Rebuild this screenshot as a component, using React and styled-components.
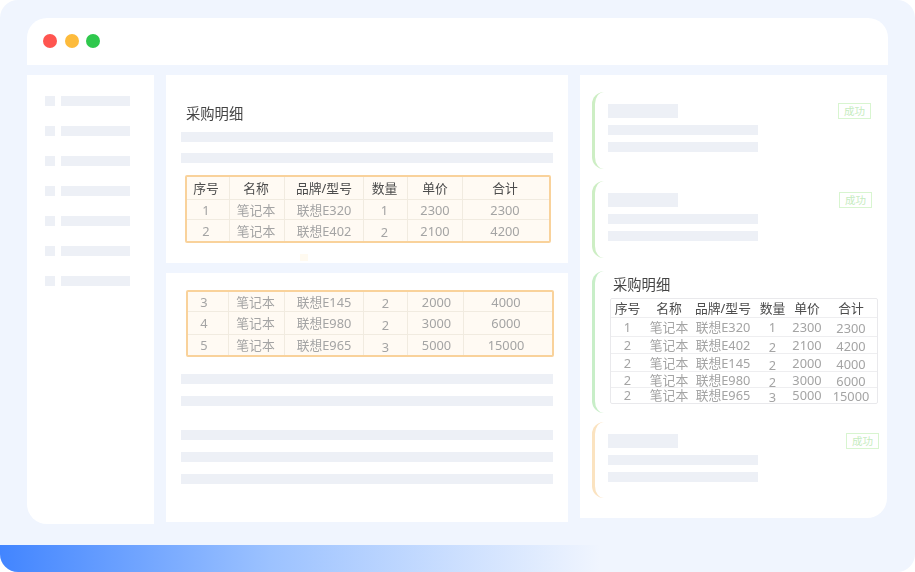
import React from "react";
import styled, { createGlobalStyle } from "styled-components";

const Global = createGlobalStyle`
  html, body { margin: 0; padding: 0; background: #fff; }
  body { font-family: "Noto Sans", "Noto Sans CJK SC", sans-serif; }
`;

const Stage = styled.div`
  width: 915px; height: 572px; background: #f0f5fe; border-radius: 18px;
  overflow: hidden; display: flex; flex-direction: column;
`;
const Win = styled.div`
  width: 861px; margin: 18px 0 0 27px; display: flex; flex-direction: column; gap: 10px;
`;
const TitleBar = styled.div`
  height: 47px; background: #fff; border-radius: 20px 20px 0 0;
  display: flex; align-items: center; padding: 0 0 1px 16px; gap: 7.5px; box-sizing: border-box;
`;
const Dot = styled.span`
  width: 14px; height: 14px; border-radius: 50%; background: ${p => p.$c};
`;
const Columns = styled.div`
  display: flex; align-items: flex-start; gap: 12px;
`;
const Sidebar = styled.div`
  width: 127px; height: 449px; box-sizing: border-box; background: #fff;
  border-radius: 0 0 0 20px; padding: 21px 0 0 18px;
  display: flex; flex-direction: column; gap: 20px;
`;
const NavRow = styled.div`display: flex; gap: 6px;`;
const NavIcon = styled.div`width: 10px; height: 10px; background: #edf0f6;`;
const NavBar = styled.div`width: 69px; height: 10px; background: #edf0f6;`;

const Middle = styled.div`
  width: 402px; display: flex; flex-direction: column; gap: 10px;
`;
const Card = styled.div`
  background: #fff; height: ${p => p.$h}px; box-sizing: border-box;
  padding: ${p => p.$pt}px 15px 0;
  position: relative;
`;
const Heading = styled.div`
  font-size: 14.3px; line-height: 20px; color: #444; margin-left: ${p => p.$ml}px;
  filter: blur(0.35px);
`;
const Line = styled.div`
  height: 10px; width: ${p => p.$w || 372}px; background: #edf0f6;
  margin-top: ${p => p.$mt || 0}px;
`;
const Table = styled.div`
  margin: ${p => p.$m};
  width: ${p => p.$w}px; box-sizing: border-box;
  border: ${p => (p.$plain ? "1px solid #e9e9ec" : "2px solid #f9d29b")};
  border-radius: 2px;
  background: ${p => (p.$plain ? "#fff" : "#fffaf3")};
  filter: blur(0.4px);
`;
const Row = styled.div`
  display: grid; grid-template-columns: ${p => p.$cols};
  height: ${p => p.$h}px; box-sizing: border-box;
  &:not(:last-child) { border-bottom: 1px solid ${p => (p.$plain ? "#eeeef0" : "#f1ebe0")}; }
`;
const Cell = styled.div`
  display: flex; align-items: center; justify-content: center;
  box-sizing: border-box; white-space: nowrap; line-height: 1; min-height: 0;
  font-size: 12.8px;
  color: ${p => (p.$head ? "#4c4c4c" : "#a4a4a4")};
  padding-top: ${p => Math.max(p.$dy || 0, 0) * 2}px;
  padding-bottom: ${p => Math.max(-(p.$dy || 0), 0) * 2}px;
  padding-left: ${p => Math.max(p.$dx || 0, 0) * 2}px;
  padding-right: ${p => Math.max(-(p.$dx || 0), 0) * 2}px;
  ${p => (p.$plain ? "" : "&:not(:last-child) { border-right: 1px solid #f1ebe0; }")}
`;
const Speck = styled.div`
  position: absolute; left: 134px; top: 179px; width: 8px; height: 7px; background: #fffaf0;
`;

const RightCol = styled.div`
  width: 307px; height: 443px; box-sizing: border-box; background: #fff;
  border-radius: 0 0 20px 0; padding: 17px 0 0 12px;
  display: flex; flex-direction: column;
`;
const Item = styled.div`
  height: ${p => p.$h}px; box-sizing: border-box;
  border-left: 3px solid ${p => p.$c}; border-radius: 12px 0 0 12px;
  margin-bottom: ${p => p.$mb || 0}px;
  padding: ${p => p.$pt || 12}px 0 0 13px;
  display: flex; align-items: flex-start; justify-content: space-between;
`;
const ItemBody = styled.div`display: flex; flex-direction: column; gap: 7px;`;
const ItemTitle = styled.div`width: 70px; height: 14px; background: #edf0f6;`;
const ItemStack = styled.div`display: flex; flex-direction: column;`;
const ItemTableWrap = styled.div`display: flex; flex-direction: column; margin-left: 2px;`;
const Tag = styled.div`
  width: 33px; height: 16px; box-sizing: border-box; margin-top: ${p => p.$mt}px;
  margin-right: ${p => p.$mr}px;
  border: 1px solid #d8f5d0; color: #c6ecc0; font-size: 10.5px;
  display: flex; align-items: center; justify-content: center; line-height: 1;
`;
const Spacer = styled.div`flex: 1;`;
const BottomBar = styled.div`
  height: 27px; width: 600px; background: linear-gradient(90deg, #4285ff 0%, #9cc2ff 45%, #f0f5fe 100%);
  border-bottom-left-radius: 14px;
`;

const mid1Cols = "43px 55px 79px 44px 55px 1fr";
const mid2Cols = "41px 56px 79px 44px 56px 1fr";
const rCols = "33px 48px 62px 37px 32px 1fr";

const head = ["序号", "名称", "品牌/型号", "数量", "单价", "合计"];
const rows = [
  ["1", "笔记本", "联想E320", "1", "2300", "2300"],
  ["2", "笔记本", "联想E402", "2", "2100", "4200"],
  ["3", "笔记本", "联想E145", "2", "2000", "4000"],
  ["4", "笔记本", "联想E980", "2", "3000", "6000"],
  ["5", "笔记本", "联想E965", "3", "5000", "15000"],
];

function DataTable({ m, w, cols, plain, showHead, data, heights, shifts, nudge }) {
  const all = showHead ? [head, ...data] : data;
  return (
    <Table $m={m} $w={w} $plain={plain}>
      {all.map((r, i) => (
        <Row key={i} $cols={cols} $h={heights[i]} $plain={plain}>
          {r.map((c, j) => (
            <Cell key={j} $head={showHead && i === 0} $plain={plain} $dx={nudge[j]}
              $dy={shifts(i, j, showHead && i === 0)}>{c}</Cell>
          ))}
        </Row>
      ))}
    </Table>
  );
}

const Nav = () => (
  <Sidebar>
    {Array.from({ length: 7 }).map((_, i) => (
      <NavRow key={i}><NavIcon /><NavBar /></NavRow>
    ))}
  </Sidebar>
);

const Skeleton = () => (
  <ItemBody>
    <ItemTitle />
    <ItemStack>
      <Line $w={150} />
      <Line $w={150} $mt={7} />
    </ItemStack>
  </ItemBody>
);

const rightShift = [0, 0, 0, 1, 1, 0];

export default function App() {
  return (
    <>
      <Global />
      <Stage>
        <Win>
          <TitleBar>
            <Dot $c="#ff5550" />
            <Dot $c="#fdbb3c" />
            <Dot $c="#2fc84d" />
          </TitleBar>
          <Columns>
            <Nav />
            <Middle>
              <Card $h={188} $pt={29}>
                <Heading $ml={5}>采购明细</Heading>
                <Line $mt={8} />
                <Line $mt={11} />
                <DataTable m="12px 0 0 4px" w={366} cols={mid1Cols} showHead
                  data={rows.slice(0, 2)} heights={[23, 20, 21]}
                  nudge={[-2, -1, 0, -1, 0, -1]}
                  shifts={(i, j, h) => (h ? 0 : j === 3 && i === 2 ? 2 : 1)} />
                <Speck />
              </Card>
              <Card $h={249} $pt={17}>
                <DataTable m="0 0 0 5px" w={368} cols={mid2Cols}
                  data={rows.slice(2)} heights={[20, 23, 20]}
                  nudge={[-4, -1, 0, 0, 1, -2]}
                  shifts={(i, j) => (j === 3 ? 2 : 0.5)} />
                <Line $mt={17} />
                <Line $mt={12} />
                <Line $mt={24} />
                <Line $mt={12} />
                <Line $mt={12} />
              </Card>
            </Middle>
            <RightCol>
              <Item $h={77} $c="#cdeec4" $mb={12}>
                <Skeleton />
                <Tag $mt={-1} $mr={16}>成功</Tag>
              </Item>
              <Item $h={77} $c="#cdeec4" $mb={13}>
                <Skeleton />
                <Tag $mt={-1} $mr={15}>成功</Tag>
              </Item>
              <Item $h={142} $c="#c8eec8" $mb={9} $pt={4}>
                <ItemTableWrap>
                  <Heading $ml={3}>采购明细</Heading>
                  <DataTable m="3px 0 0 0" w={268} cols={rCols} plain showHead
                    data={[rows[0], ["2", ...rows[1].slice(1)], ["2", ...rows[2].slice(1)], ["2", ...rows[3].slice(1)], ["2", ...rows[4].slice(1)]]}
                    heights={[19, 19, 17, 18, 16, 15]}
                    nudge={[0, 1, 0, 0, 0, 1]}
                    shifts={(i, j, h) => (h ? 0 : rightShift[i] + (j === 3 && i > 1 ? 2 : j === 5 ? 1 : 0))} />
                </ItemTableWrap>
              </Item>
              <Item $h={76} $c="#fbe3c0">
                <Skeleton />
                <Tag $mt={-1} $mr={8}>成功</Tag>
              </Item>
            </RightCol>
          </Columns>
        </Win>
        <Spacer />
        <BottomBar />
      </Stage>
    </>
  );
}
